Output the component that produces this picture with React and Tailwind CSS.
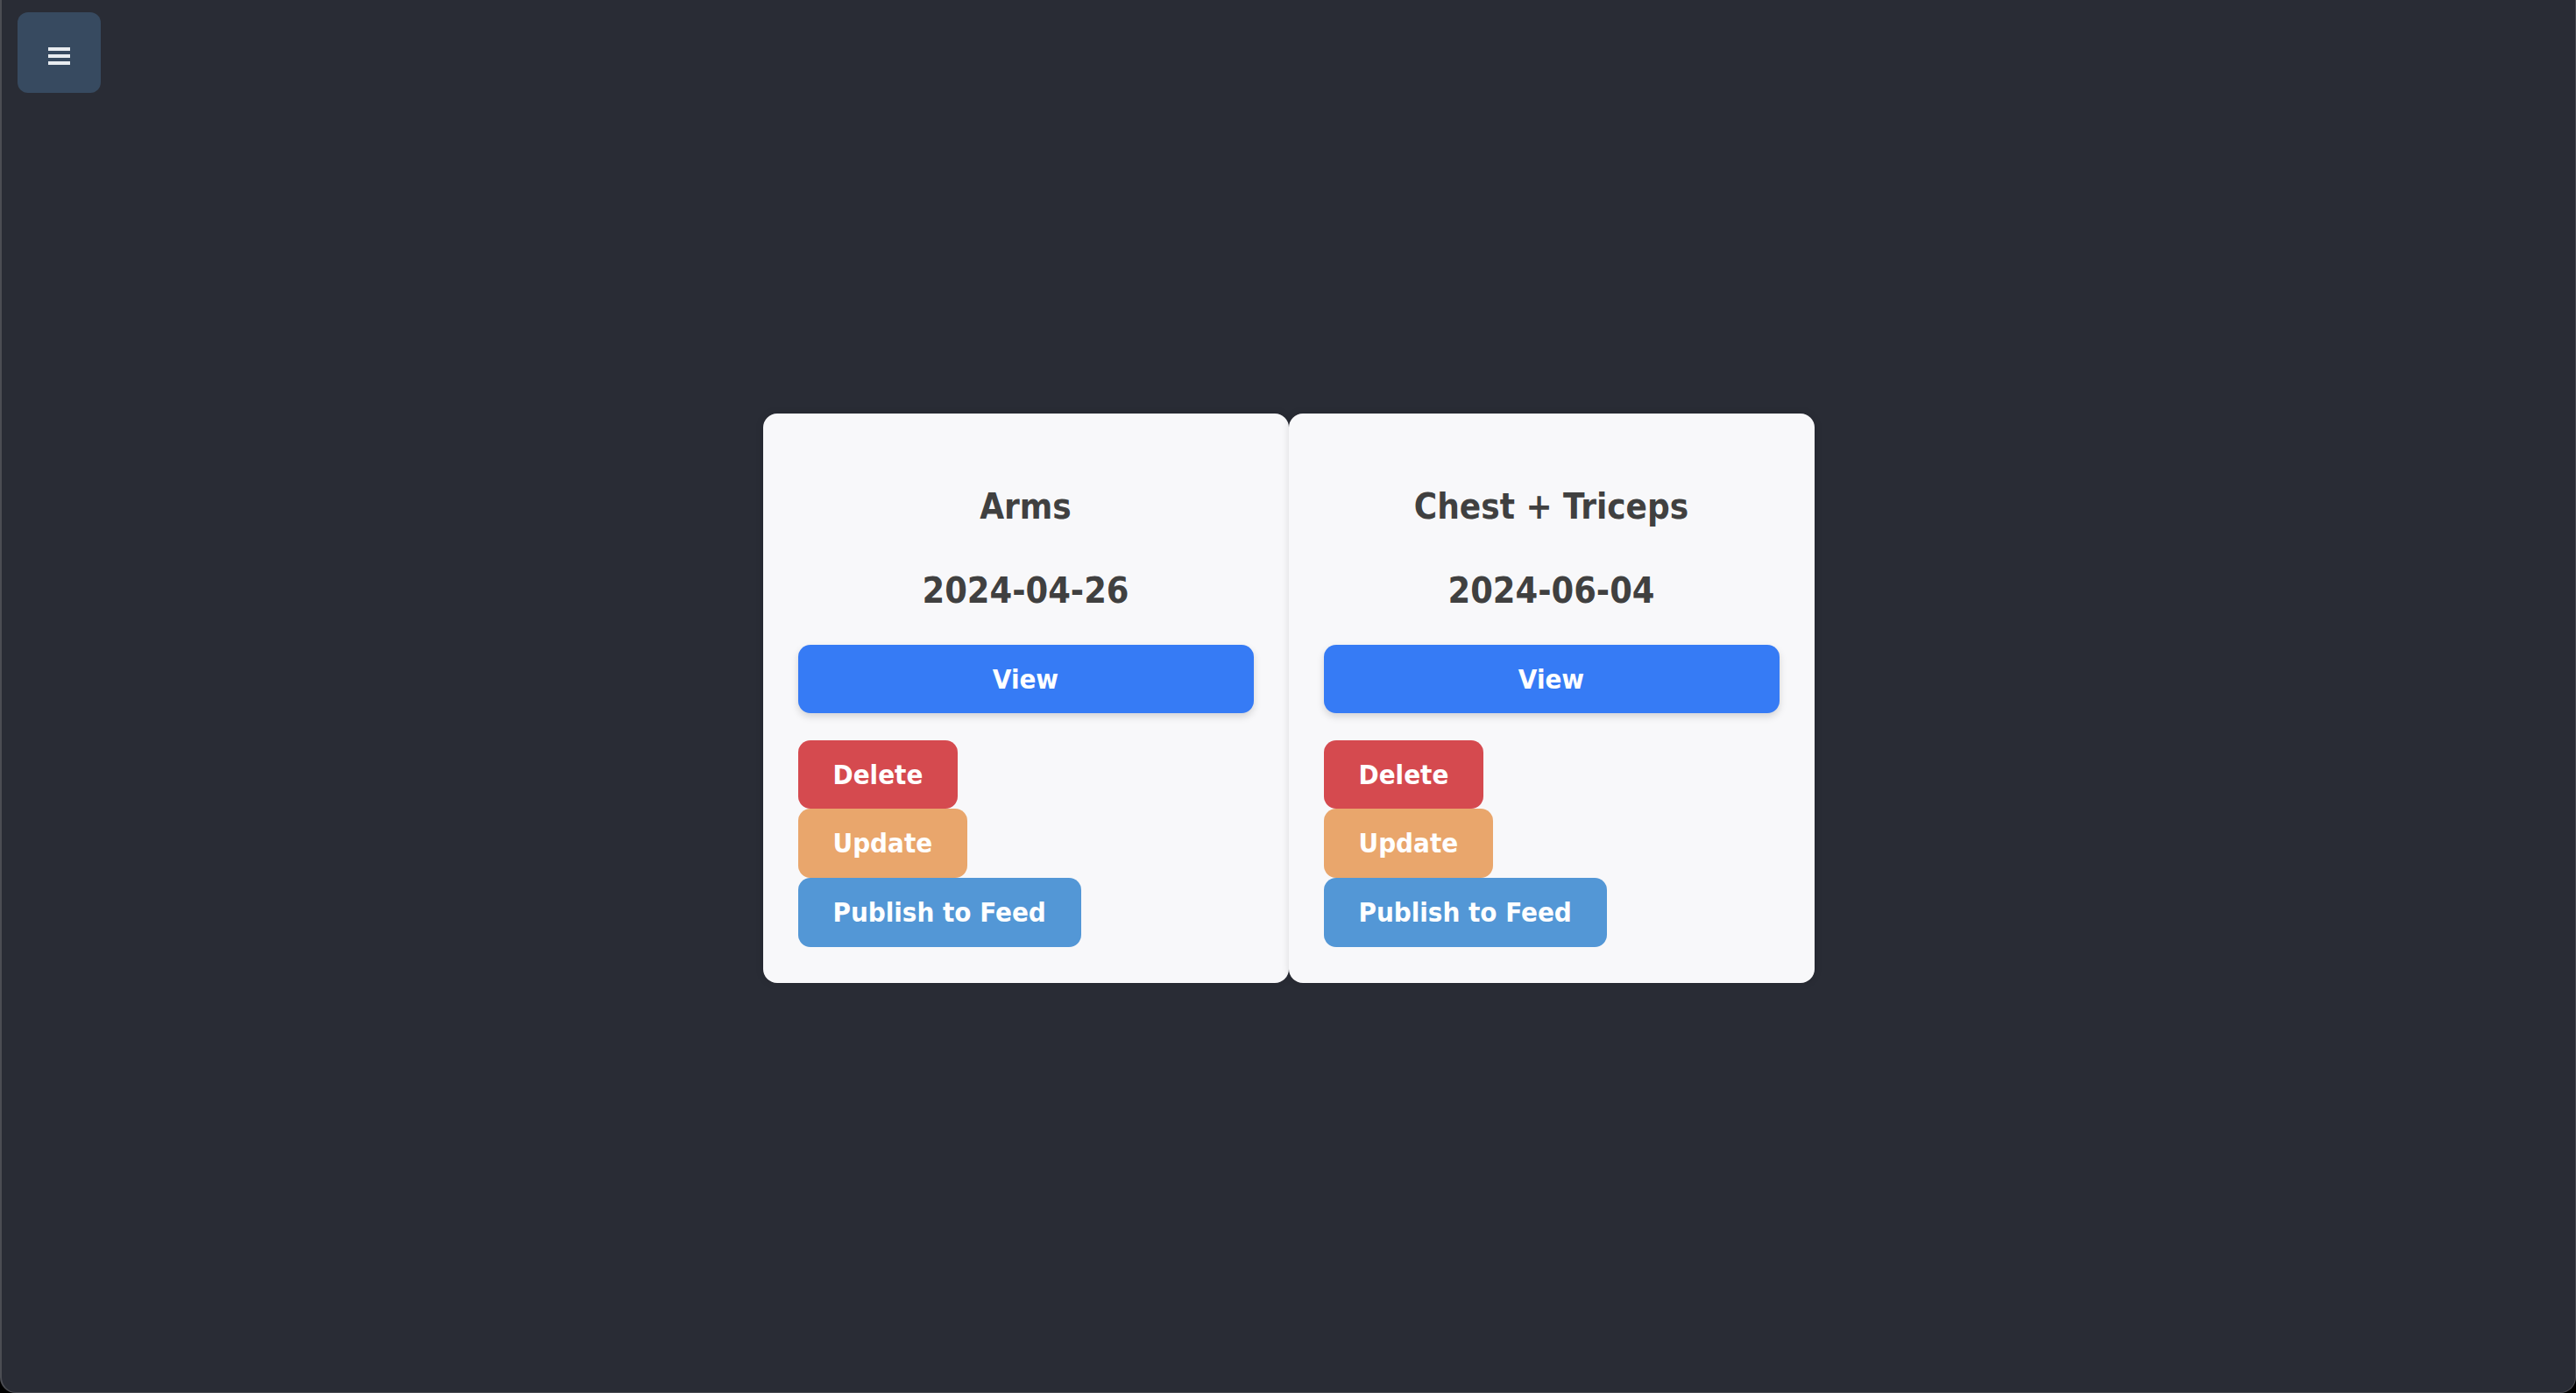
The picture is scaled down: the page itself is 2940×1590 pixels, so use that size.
import React from 'react'

const workouts = [
    { id: 1, name: 'Arms', date: '2024-04-26' },
    { id: 2, name: 'Chest + Triceps', date: '2024-06-04' },
]

function WorkoutCard({ workout }) {
    return (
        <div className="w-[600px] h-[650px] bg-[#f8f8fa] rounded-[16px] shadow-[0_0_10px_rgba(0,0,0,0.12)] pt-[83px] px-[40px] pb-[40px] flex flex-col">
            <h3 className="text-center text-[40px] leading-[46px] font-bold text-[#404040] mb-[49px]">{workout.name}</h3>
            <h3 className="text-center text-[41px] leading-[48px] font-bold text-[#404040] mb-[38px]">{workout.date}</h3>
            <button className="w-full h-[78px] rounded-[14px] bg-[#367bf5] text-white text-[31px] font-bold shadow-[0_4px_8px_rgba(0,0,0,0.15)] mb-[31px]">
                View
            </button>
            <div className="flex flex-col items-start">
                <button className="h-[78px] px-[40px] rounded-[14px] bg-[#d54a4f] text-white text-[31px] font-bold">Delete</button>
                <button className="h-[79px] px-[40px] rounded-[14px] bg-[#e9a66c] text-white text-[31px] font-bold">Update</button>
                <button className="h-[79px] px-[40px] rounded-[14px] bg-[#5397d6] text-white text-[31px] font-bold">Publish to Feed</button>
            </div>
        </div>
    )
}

export default function App() {
    return (
        <div className="w-[2940px] h-[1590px] bg-black" style={{ fontFamily: '"DejaVu Sans Condensed", "DejaVu Sans", sans-serif' }}>
            <div className="w-full h-full bg-[#292c35] border-l-2 border-r border-b border-[#4b4d53] rounded-b-[18px] flex flex-col font-stretch-condensed">
                {/* top bar */}
                <div className="pl-[18px] pt-[14px]">
                    <button className="w-[95px] h-[92px] rounded-[12px] bg-[#374a60] flex flex-col items-center justify-center gap-[4px] pt-[8px]">
                        <span className="w-[25px] h-[4px] bg-[#e8ecf0]" />
                        <span className="w-[25px] h-[4px] bg-[#e8ecf0]" />
                        <span className="w-[25px] h-[4px] bg-[#e8ecf0]" />
                    </button>
                </div>

                {/* cards */}
                <div className="flex justify-center mt-[366px]">
                    {workouts.map((w) => (
                        <WorkoutCard key={w.id} workout={w} />
                    ))}
                </div>
            </div>
        </div>
    )
}
